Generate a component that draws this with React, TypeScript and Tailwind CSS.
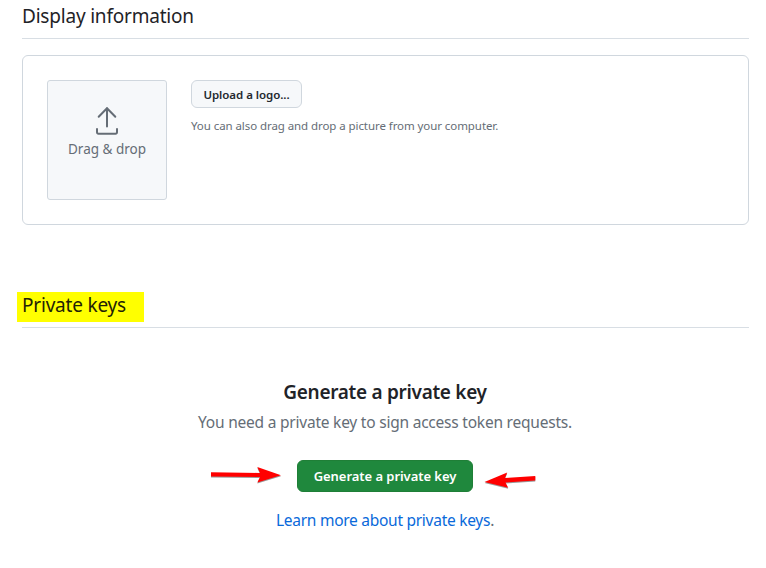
import React from "react";

function SectionTitle({ children }: { children: React.ReactNode }) {
  return (
    <h2 className="h-[39px] border-b border-[#d8dee4] pt-[2px] text-[19px] leading-[28px] tracking-[-0.2px] whitespace-nowrap">
      {children}
    </h2>
  );
}

function UploadIcon() {
  return (
    <svg width="32" height="32" viewBox="0 0 32 32" fill="none" stroke="#656d76" strokeWidth="2" strokeLinecap="round" strokeLinejoin="round">
      <path d="M16 22.500V4M7.700 12.800 16 4.300l8.300 8.500M6 25v3.300a1.400 1.400 0 0 0 1.400 1.400h17.200a1.400 1.400 0 0 0 1.400-1.400V25" />
    </svg>
  );
}

function RightArrow() {
  return (
    <svg className="absolute top-[5px] left-[-87px] drop-shadow-[0_1px_0.5px_rgba(0,0,0,0.4)]" width="72" height="20" viewBox="0 0 72 20" fill="#f00">
      <path d="M1 7.3 50 8 47.300 2 71 10.200 47.300 17.600 50 12 1 11.500Z" />
    </svg>
  );
}

function LeftArrow() {
  return (
    <svg className="absolute top-[10px] left-[187px] drop-shadow-[0_1px_0.5px_rgba(0,0,0,0.4)]" width="53" height="20" viewBox="0 0 53 20" fill="#f00">
      <path d="M51.300 6 21 8 23.200 2.500 0.500 12 24.200 17.700 21.500 12.500 51.300 10.500Z" />
    </svg>
  );
}

export default function App() {
  return (
    <main className="h-[568px] overflow-hidden bg-white px-[22px] font-['Noto_Sans','Open_Sans',sans-serif] text-[#1f2328]">
      <div className="w-[727px]">
        <SectionTitle>Display information</SectionTitle>
        <section className="mt-4 flex h-[170px] gap-6 rounded-md border border-[#d0d7de] p-6">
          <div className="flex h-[120px] w-[120px] flex-col items-center rounded-[3px] border border-[#d0d7de] bg-[#f6f8fa] pt-[23px] text-[#656d76]">
            <UploadIcon />
            <span className="mt-[3px] text-[13.500px] leading-5 whitespace-nowrap">Drag &amp; drop</span>
          </div>
          <div className="flex flex-col items-start">
            <button className="h-7 w-[111px] rounded-md border border-[#d0d7de] bg-[#f6f8fa] pt-[2px] text-[11.500px] leading-5 font-semibold tracking-[-0.05px] whitespace-nowrap text-[#24292f]">
              Upload a logo...
            </button>
            <p className="mt-[9px] text-[11.500px] leading-[18px] tracking-[-0.075px] whitespace-nowrap text-[#656d76]">
              You can also drag and drop a picture from your computer.
            </p>
          </div>
        </section>
        <div className="mt-16">
          <h2 className="flex h-[39px] items-start border-b border-[#d8dee4] pt-[3px]">
            <span className="-ml-[5px] h-[30px] w-[127px] bg-[#ff0] pl-[5px] text-[19px] leading-[27px] tracking-[-0.2px] whitespace-nowrap text-[#1f2306]">
              Private keys
            </span>
          </h2>
        </div>
        <section className="flex flex-col items-center pt-[49px] pr-px">
          <h3 className="text-[19px] leading-[30px] font-semibold tracking-[-0.3px] whitespace-nowrap">Generate a private key</h3>
          <p className="mt-[3px] text-[15.500px] leading-6 tracking-[-0.22px] whitespace-nowrap text-[#656d76]">
            You need a private key to sign access token requests.
          </p>
          <div className="relative mt-[26px] h-8 w-[176px]">
            <RightArrow />
            <button className="h-8 w-[176px] rounded-md border border-[#1f7f37] bg-[#1f883d] text-[13px] leading-5 font-semibold tracking-[-0.05px] whitespace-nowrap text-white">
              Generate a private key
            </button>
            <LeftArrow />
          </div>
          <p className="mt-4 text-[15.500px] leading-6 tracking-[-0.27px] whitespace-nowrap text-[#656d76]">
            <a className="text-[#0969da]">Learn more about private keys</a>.
          </p>
        </section>
      </div>
    </main>
  );
}
